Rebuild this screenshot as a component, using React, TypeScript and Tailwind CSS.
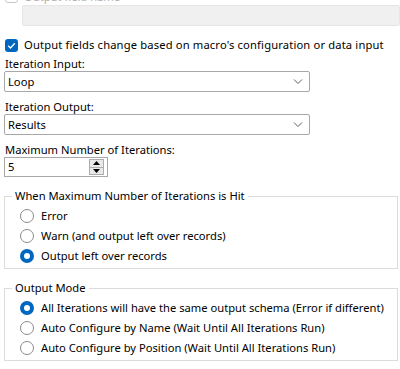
import React from 'react';

const font = { fontFamily: '"Noto Sans", "Open Sans", sans-serif' };

const Chevron = () => (
  <svg width="10" height="6" viewBox="0 0 10 6" fill="none" stroke="#5f5f5f" strokeWidth="1">
    <polyline points="1,0.5 5,4.5 9,0.5" />
  </svg>
);

const Radio = ({ checked, label }: { checked?: boolean; label: string }) => (
  <div className="flex items-center h-[20px] pl-[15px] gap-[7px]">
    {checked ? (
      <svg width="14" height="14" viewBox="0 0 14 14">
        <circle cx="7" cy="7" r="7" fill="#0067c0" />
        <circle cx="7" cy="7" r="3" fill="#ffffff" />
      </svg>
    ) : (
      <svg width="14" height="14" viewBox="0 0 14 14">
        <circle cx="7" cy="7" r="6.5" fill="#ffffff" stroke="#8a8a8a" strokeWidth="1" />
      </svg>
    )}
    <span>{label}</span>
  </div>
);

const Select = ({ value }: { value: string }) => (
  <div className="ml-[4px] w-[306px] h-[21px] border border-[#a8a8a8] rounded-[2px] flex items-center justify-between pl-[3px] pr-[6px]">
    <span>{value}</span>
    <Chevron />
  </div>
);

const GroupBox = ({ title, children }: { title: string; children: React.ReactNode }) => (
  <fieldset className="ml-[4px] mr-[2px] border border-[#dcdcdc] pb-[2px]">
    <legend className="ml-[7px] px-[3px] leading-[14px]">{title}</legend>
    <div className="pt-[3px]">{children}</div>
  </fieldset>
);

export default function App() {
  return (
    <div className="w-[400px] h-[369px] bg-white overflow-hidden text-[11.2px] text-black leading-[14px]" style={font}>
      <div className="-mt-[10px] h-[13px] flex items-center gap-[6px] pl-[5px] text-[#b0b0b0]">
        <div className="w-[13px] h-[13px] rounded-[3px] border border-[#c8c8c8]" />
        <span>Output field name</span>
      </div>
      <div className="ml-[22px] mt-[2px] h-[21px] bg-[#f0f0f0] rounded-[2px] border border-[#e6e6e6]" />

      <div className="mt-[12px] flex items-center gap-[6px] pl-[5px] h-[14px]">
        <svg width="13" height="13" viewBox="0 0 13 13">
          <rect x="0" y="0" width="13" height="13" rx="3" fill="#0067c0" />
          <polyline points="3.2,6.8 5.5,9 9.8,4.2" fill="none" stroke="#ffffff" strokeWidth="1.3" />
        </svg>
        <span className="tracking-[0.15px]">Output fields change based on macro's configuration or data input</span>
      </div>

      <div className="mt-[5px] pl-[5px]">Iteration Input:</div>
      <Select value="Loop" />

      <div className="mt-[8px] pl-[5px]">Iteration Output:</div>
      <Select value="Results" />

      <div className="mt-[8px] pl-[5px]">Maximum Number of Iterations:</div>
      <div className="ml-[4px] w-[104px] h-[20px] border border-[#a8a8a8] flex items-center justify-between pl-[3px] pr-[3px]">
        <span>5</span>
        <div className="flex flex-col w-[15px] h-[16px] border border-[#adadad] bg-[#e8e8e8]">
          <div className="flex-1 flex items-center justify-center border-b border-[#adadad]">
            <svg width="7" height="4" viewBox="0 0 7 4"><polygon points="3.5,0 7,4 0,4" fill="#000" /></svg>
          </div>
          <div className="flex-1 flex items-center justify-center">
            <svg width="7" height="4" viewBox="0 0 7 4"><polygon points="0,0 7,0 3.5,4" fill="#000" /></svg>
          </div>
        </div>
      </div>

      <div className="mt-[12px]">
        <GroupBox title="When Maximum Number of Iterations is Hit">
          <Radio label="Error" />
          <Radio label="Warn (and output left over records)" />
          <Radio checked label="Output left over records" />
        </GroupBox>
      </div>

      <div className="mt-[12px]">
        <GroupBox title="Output Mode">
          <Radio checked label="All Iterations will have the same output schema (Error if different)" />
          <Radio label="Auto Configure by Name (Wait Until All Iterations Run)" />
          <Radio label="Auto Configure by Position (Wait Until All Iterations Run)" />
        </GroupBox>
      </div>
    </div>
  );
}
